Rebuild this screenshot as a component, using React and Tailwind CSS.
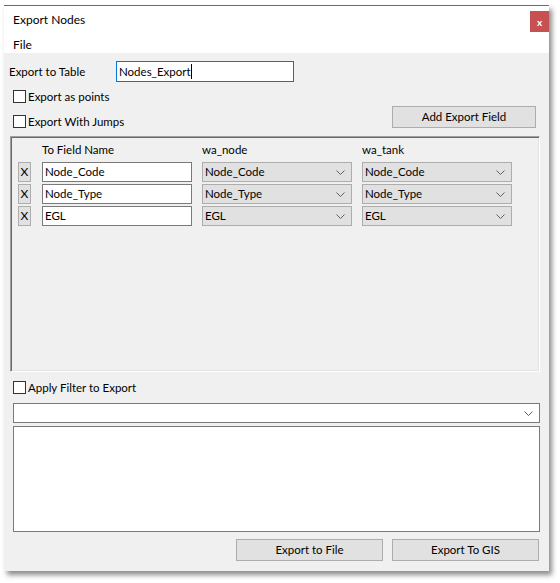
import React from "react";

const font = { fontFamily: '"Segoe UI", "Lato", "Noto Sans", sans-serif' };

function Chevron() {
  return (
    <svg width="9" height="5" viewBox="0 0 9 5" className="shrink-0">
      <path d="M0.5 0.5 L4.5 4.5 L8.5 0.5" fill="none" stroke="#606060" strokeWidth="1" />
    </svg>
  );
}

function Check({ label }) {
  return (
    <div className="flex items-center h-[17px]">
      <div className="w-[13px] h-[13px] bg-white border border-[#333333]" />
      <span className="ml-[2px] leading-[16px]">{label}</span>
    </div>
  );
}

function Select({ value }) {
  return (
    <div className="w-[150px] h-[20px] bg-[#e1e1e1] border border-[#adadad] flex items-center justify-between pl-[2px] pr-[6px]">
      <span className="leading-[16px]">{value}</span>
      <Chevron />
    </div>
  );
}

function Row({ name }) {
  return (
    <div className="flex items-center h-[20px]">
      <div className="w-[13px] h-[20px] bg-[#e1e1e1] border border-[#adadad] flex items-center justify-center text-[12px] leading-none">X</div>
      <div className="ml-[11px] w-[150px] h-[20px] bg-white border border-[#7a7a7a] flex items-center pl-[2px] leading-[16px]">{name}</div>
      <div className="ml-[10px]"><Select value={name} /></div>
      <div className="ml-[10px]"><Select value={name} /></div>
    </div>
  );
}

function Btn({ children, w }) {
  return (
    <div className={`${w} h-[22px] bg-[#e1e1e1] border border-[#adadad] flex items-center justify-center leading-[16px]`}>{children}</div>
  );
}

export default function App() {
  return (
    <div className="w-[560px] h-[583px] bg-white overflow-hidden text-[11.5px] text-black" style={font}>
      <div className="ml-[4px] mt-[5px] w-[545px] h-[566px] bg-[#f0f0f0] border-t border-[#1883d7] shadow-[3px_4px_5px_rgba(0,0,0,0.45)] flex flex-col">
        <div className="bg-white h-[47px] flex flex-col">
          <div className="flex items-start justify-between h-[32px]">
            <span className="pl-[9px] pt-[6px] leading-[16px] text-[12px]">Export Nodes</span>
            <div className="mt-[5px] w-[19px] h-[21px] bg-[#c75050] flex items-center justify-center text-white font-bold text-[10px] leading-none">x</div>
          </div>
          <div className="pl-[9px] leading-[16px] text-[12px]">File</div>
        </div>
        <div className="flex items-center mt-[8px] pl-[5px]">
          <span className="w-[107px] leading-[16px]">Export to Table</span>
          <div className="w-[178px] h-[21px] bg-white border border-[#0078d7] flex items-center pl-[2px] leading-[16px]">
            Nodes_Export<span className="w-px h-[15px] bg-black" />
          </div>
        </div>
        <div className="flex items-start mt-[6px]">
          <div className="flex flex-col gap-[8px] pl-[9px]">
            <Check label="Export as points" />
            <Check label="Export With Jumps" />
          </div>
          <div className="ml-auto mr-[13px] mt-[18px]">
            <Btn w="w-[144px]">Add Export Field</Btn>
          </div>
        </div>
        <div className="ml-[6px] mt-[6px] w-[530px] h-[236px] border-t border-l border-[#a0a0a0] border-r border-b border-r-white border-b-white shadow-[inset_1px_1px_0_#696969,inset_-1px_-1px_0_#e3e3e3] flex flex-col">
          <div className="flex h-[25px] items-center">
            <span className="ml-[31px] w-[160px] leading-[16px]">To Field Name</span>
            <span className="w-[160px] leading-[16px]">wa_node</span>
            <span className="leading-[16px]">wa_tank</span>
          </div>
          <div className="flex flex-col gap-[2px] ml-[7px]">
            <Row name="Node_Code" />
            <Row name="Node_Type" />
            <Row name="EGL" />
          </div>
        </div>
        <div className="mt-[7px] pl-[9px]">
          <Check label="Apply Filter to Export" />
        </div>
        <div className="ml-[9px] mt-[7px] w-[527px] h-[20px] bg-white border border-[#7a7a7a] flex items-center justify-end pr-[6px]">
          <Chevron />
        </div>
        <div className="ml-[9px] mt-[3px] w-[527px] h-[106px] bg-white border border-[#7a7a7a]" />
        <div className="flex justify-end gap-[9px] mr-[10px] mt-[7px]">
          <Btn w="w-[147px]">Export to File</Btn>
          <Btn w="w-[147px]">Export To GIS</Btn>
        </div>
      </div>
    </div>
  );
}
